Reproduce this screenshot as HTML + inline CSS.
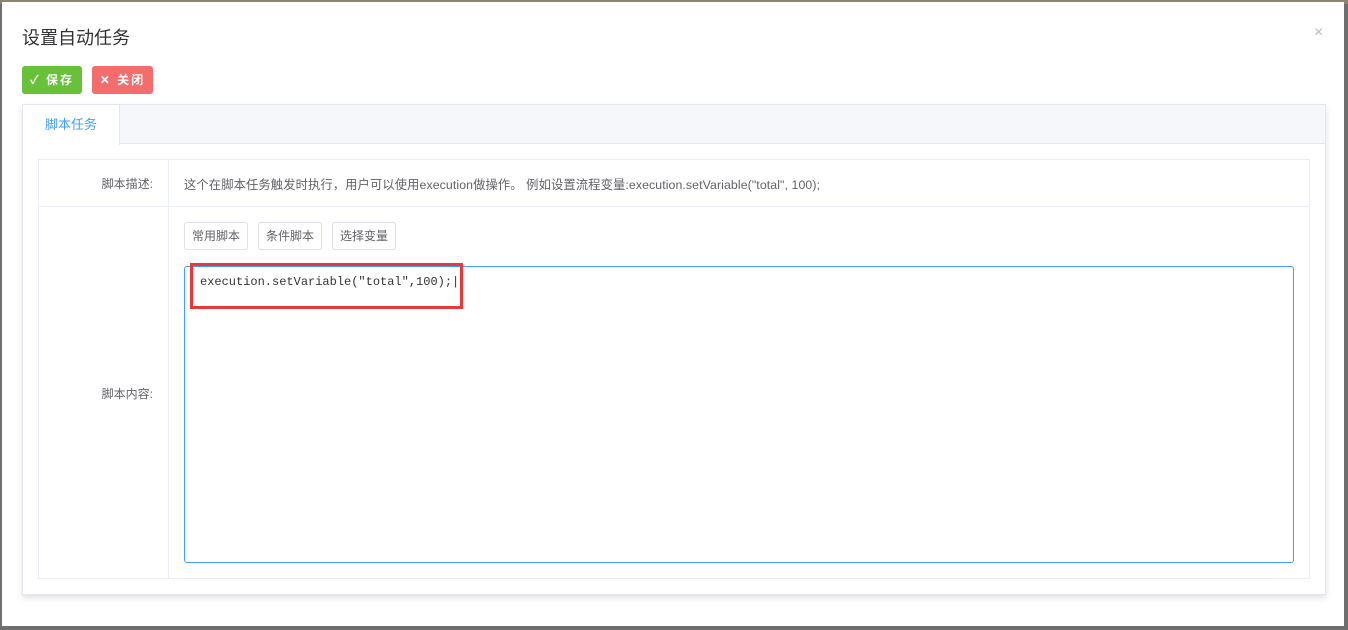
<!DOCTYPE html><html><head><meta charset="utf-8"><style>
*{box-sizing:border-box;margin:0;padding:0}
body{width:1348px;height:630px;background:#6e6e6e;position:relative;overflow:hidden;font-family:"Liberation Sans","Noto Sans CJK SC",sans-serif;color:#606266}
.top{position:absolute;left:0;top:0;width:1348px;height:4px;background:#8a8470}
.dlg{position:absolute;left:2px;top:2px;width:1342px;height:624px;background:#fff}
.a{position:absolute}
.title{left:20px;top:22px;font-size:18px;color:#303133}
.x{left:1312px;top:22px;font-size:16px;color:#bbb}
.btn{top:64px;height:28px;border-radius:3px;color:#fff;font-size:12px;font-weight:bold;line-height:28px;text-align:center;letter-spacing:2px}
.card{left:20px;top:102px;width:1304px;height:491px;border:1px solid #e4e7ed;box-shadow:0 3px 6px rgba(0,0,0,.12)}
.hdr{left:0;top:0;width:1302px;height:39px;background:#f5f7fa;border-bottom:1px solid #e4e7ed}
.tab{left:0;top:0;width:97px;height:40px;background:#fff;border-right:1px solid #e4e7ed;color:#409eff;font-size:13px;line-height:40px;text-align:center}
.tbl{left:15px;top:54px;width:1272px;height:420px;border:1px solid #ebeef5}
.lbl{font-size:12px;color:#606266;text-align:right;width:114px}
.sb{top:220px;height:28px;border:1px solid #dcdfe6;border-radius:3px;font-size:12px;line-height:26px;text-align:center;background:#fff;color:#606266}
</style></head><body>
<div class="top"></div>
<div class="dlg">
<div class="a title">设置自动任务</div>
<div class="a x">×</div>
<div class="a btn" style="left:20px;width:60px;background:#67c23a">✓ 保存</div>
<div class="a btn" style="left:90px;width:61px;background:#f56c6c">✕ 关闭</div>
<div class="a card">
 <div class="a hdr"></div>
 <div class="a tab">脚本任务</div>
 <div class="a tbl">
  <div class="a" style="left:129px;top:0;width:1px;height:418px;background:#ebeef5"></div>
  <div class="a" style="left:0;top:46px;width:1270px;height:1px;background:#ebeef5"></div>
  <div class="a lbl" style="left:0;top:15px">脚本描述:</div>
  <div class="a" style="left:145px;top:15px;font-size:12.3px;letter-spacing:0.1px">这个在脚本任务触发时执行，用户可以使用execution做操作。 例如设置流程变量:execution.setVariable("total", 100);</div>
  <div class="a lbl" style="left:0;top:225px">脚本内容:</div>
 </div>
</div>
<div class="a sb" style="left:182px;width:64px">常用脚本</div>
<div class="a sb" style="left:256px;width:64px">条件脚本</div>
<div class="a sb" style="left:330px;width:64px">选择变量</div>
<div class="a" style="left:182px;top:264px;width:1110px;height:297px;border:1px solid #409eff;border-radius:3px"></div>
<div class="a" style="left:198px;top:273px;font-family:'Liberation Mono',monospace;font-size:12px;color:#333">execution.setVariable("total",100);|</div>
<div class="a" style="left:188px;top:261px;width:273px;height:46px;border:3px solid #e83838"></div>
</div>
</body></html>
